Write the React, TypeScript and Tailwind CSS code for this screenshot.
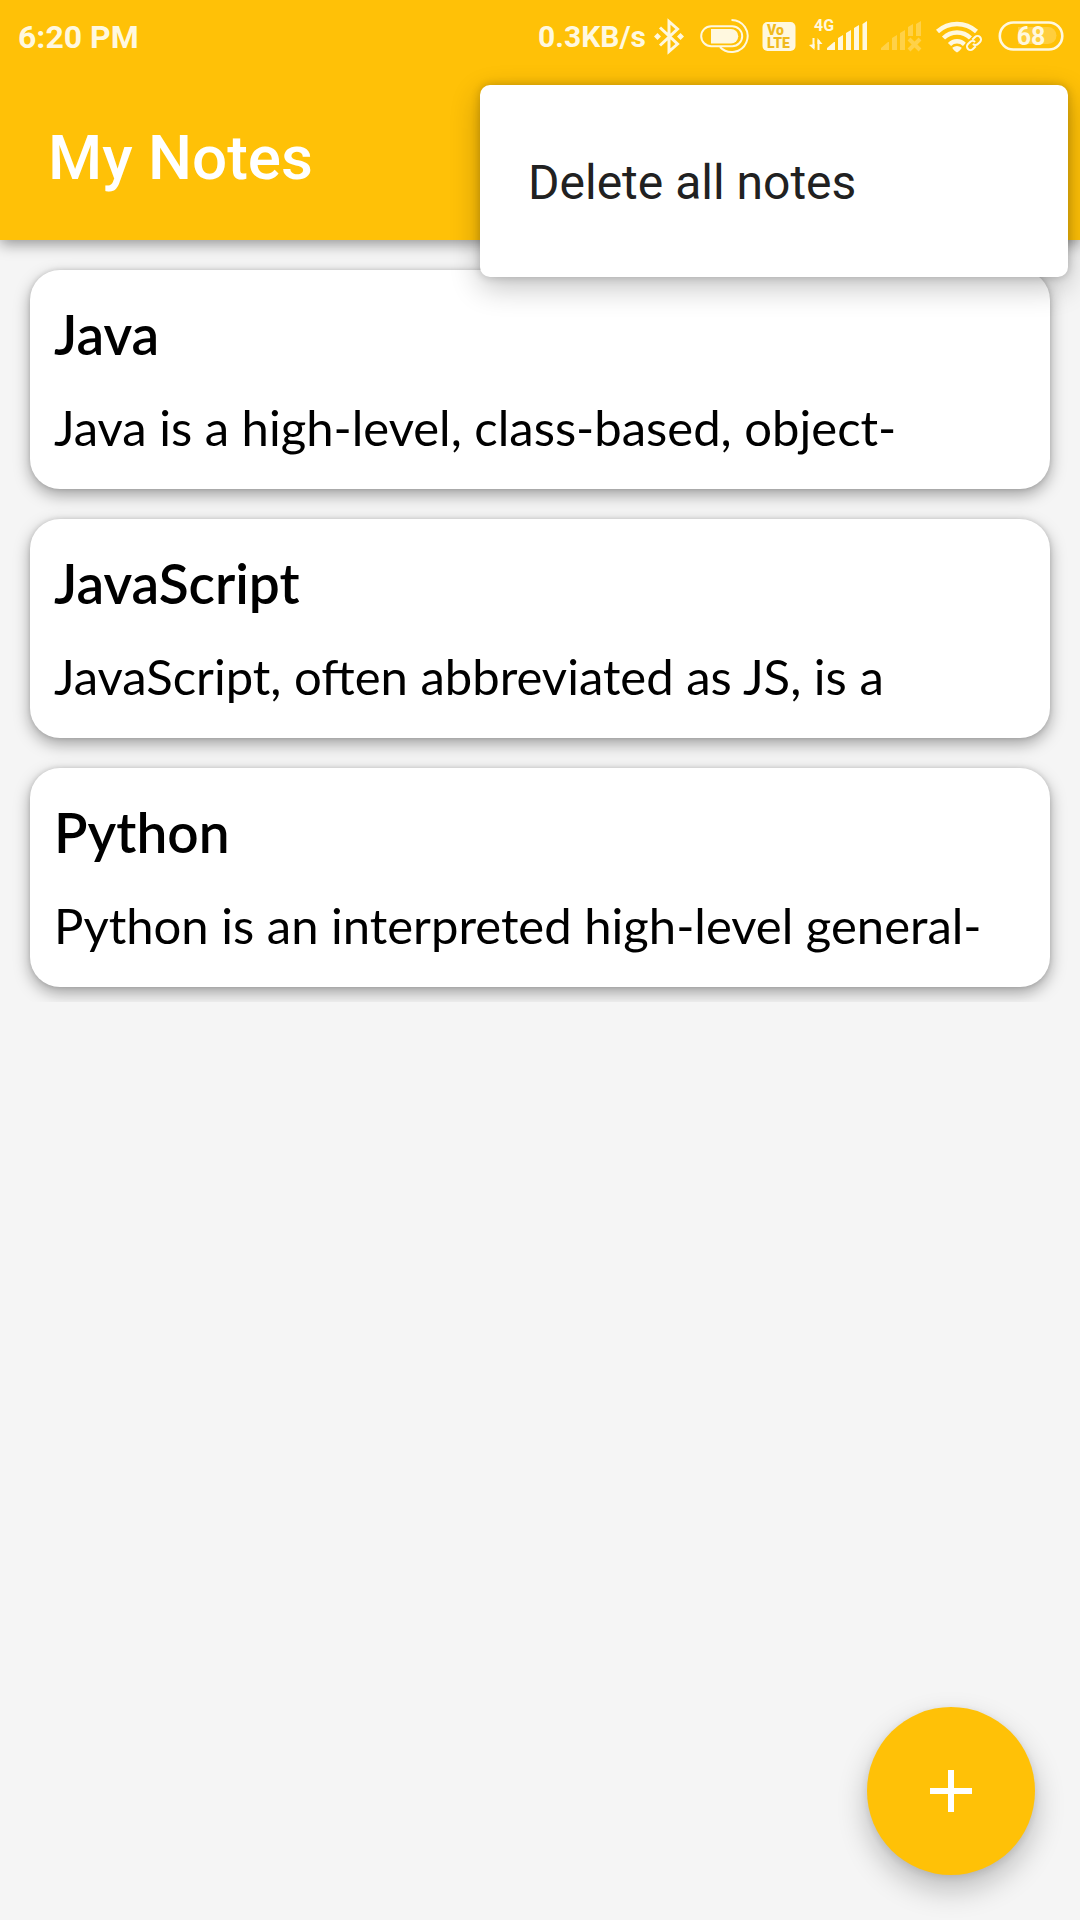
import React from "react";

const notes = [
  { title: "Java", body: "Java is a high-level, class-based, object-" },
  { title: "JavaScript", body: "JavaScript, often abbreviated as JS, is a" },
  { title: "Python", body: "Python is an interpreted high-level general-" },
];

function BluetoothIcon() {
  return (
    <svg className="h-10 w-8" viewBox="0 0 32 40" aria-label="Bluetooth" role="img">
      <path d="M6 11.500 23.500 28 15 35.500V5.500L23.500 13 6 29.500" fill="none" stroke="currentColor" strokeWidth="3" />
      <path d="m3.500 17 3.500 3.500L3.500 24 0 20.500zM26.500 17l3.500 3.500-3.500 3.500-3.500-3.500z" fill="currentColor" />
    </svg>
  );
}

function DeviceBatteryIcon() {
  return (
    <svg className="ml-3.5 h-10 w-[50px]" viewBox="0 0 50 40" aria-label="Bluetooth device battery" role="img">
      <rect x="1.200" y="10.200" width="41" height="20" rx="10" fill="none" stroke="currentColor" strokeWidth="2" />
      <path d="M11 13h20a7 7 0 0 1 0 14.500H11z" fill="currentColor" />
      <path d="M31.500 4A16 16 0 1 1 20 31" fill="none" stroke="currentColor" strokeWidth="2" />
    </svg>
  );
}

function VolteIcon() {
  return (
    <svg className="ml-3 h-10 w-[34px]" viewBox="0 0 34 40" aria-label="VoLTE" role="img">
      <rect x="0.500" y="6" width="33" height="29" rx="5" fill="currentColor" />
      <g fill="#f0b91c" fontFamily="Roboto, sans-serif" fontWeight="900">
        <text x="5" y="19" fontSize="14">Vo</text>
        <text x="5" y="32" fontSize="14">LTE</text>
      </g>
    </svg>
  );
}

function SignalIcon() {
  return (
    <svg className="ml-3 h-10 w-[60px]" viewBox="0 0 60 40" aria-label="4G signal" role="img">
      <text x="6" y="15" fontSize="16" fontFamily="Roboto, sans-serif" fontWeight="700" fill="currentColor">4G</text>
      <path d="M5.500 22v10M10.500 34V24" stroke="currentColor" strokeWidth="2" fill="none" />
      <path d="M6.500 34v-6L1 29zM9.500 22v6h5z" fill="currentColor" />
      <path d="M19 34v-2l7-6h1v8zM30 34V22l5-3v15zM38 34V17l5-3v20zM46 34V12l5-3v25zM54.500 34V8l4.500-3v29z" fill="currentColor" />
    </svg>
  );
}

function NoSignalIcon() {
  return (
    <svg className="ml-3 h-10 w-[42px] opacity-30" viewBox="0 0 42 40" aria-label="No signal" role="img">
      <path d="M1 34v-2l7-6h1v8zM12 34V22l5-3v15zM20 34V17l5-3v20zM28 20v-9l5-3v12zM36 20V8l5-3v15z" fill="currentColor" />
      <path d="m29 23 11 11M40 23 29 34" stroke="currentColor" strokeWidth="4" />
    </svg>
  );
}

function WifiIcon() {
  return (
    <svg className="ml-3.5 h-10 w-12" viewBox="0 0 48 40" aria-label="Wi-Fi" role="img">
      <g fill="none" stroke="currentColor" strokeWidth="4.500">
        <path d="M1.500 15.500a29 29 0 0 1 39 0" />
        <path d="M7.500 22a19.500 19.500 0 0 1 27 0" />
        <path d="M13.500 28.500a10.500 10.500 0 0 1 15 0" />
      </g>
      <path d="M16.500 31.500q4.500-3 9 0 .5 1.500-4.500 5-5-3.500-4.500-5z" fill="currentColor" />
      <g transform="translate(38 27) rotate(-45)" fill="none" stroke="#ffc107" strokeWidth="5">
        <rect x="-9" y="-3.500" width="10" height="7" rx="3.500" />
        <rect x="-1" y="-3.500" width="10" height="7" rx="3.500" />
      </g>
      <g transform="translate(38 27) rotate(-45)" fill="none" stroke="currentColor" strokeWidth="2">
        <path d="M-1 3.500h-4a3.500 3.500 0 0 1 0-7h3a3.500 3.500 0 0 1 3.500 3.500" />
        <path d="M1-3.500h4a3.500 3.500 0 0 1 0 7H2A3.500 3.500 0 0 1-1.500 0" />
      </g>
    </svg>
  );
}

function BatteryIcon() {
  return (
    <svg className="ml-3.5 h-10 w-[66px]" viewBox="0 0 66 40" aria-label="Battery 68 percent" role="img">
      <rect x="1.800" y="6.500" width="62.500" height="27" rx="13.500" fill="none" stroke="currentColor" strokeWidth="2.600" />
      <path d="M20 11h30a8.500 8.500 0 0 1 0 17H20z" fill="currentColor" opacity=".25" />
      <text x="33" y="29" textAnchor="middle" fontSize="25" fontFamily="Roboto, sans-serif" fontWeight="700" fill="currentColor">68</text>
    </svg>
  );
}

export default function App() {
  return (
    <div className="relative flex min-h-screen flex-col bg-[#f5f5f5] font-[Roboto,sans-serif] text-black">
      <header className="relative bg-[#ffc107] shadow-[0_4px_14px_rgba(0,0,0,0.4)]">
        <div className="flex h-[72px] items-center justify-between pr-4 pl-[18px] text-[#fff8df]">
          <time className="pt-0.5 text-[32px] leading-10 font-bold">6:20 PM</time>
          <div className="flex items-center">
            <span className="mr-2 pt-0.5 text-[30px] leading-10 font-bold">0.3KB/s</span>
            <BluetoothIcon />
            <DeviceBatteryIcon />
            <VolteIcon />
            <SignalIcon />
            <NoSignalIcon />
            <WifiIcon />
            <BatteryIcon />
          </div>
        </div>
        <div className="flex h-[168px] items-center px-12 pt-1">
          <h1 className="text-[62px] leading-[72px] font-medium text-white">My Notes</h1>
        </div>
        <div
          role="menu"
          className="absolute top-[85px] right-3 z-10 w-[588px] max-w-full rounded-[10px] bg-white py-6 shadow-[0_10px_30px_rgba(0,0,0,0.24),0_0_10px_rgba(0,0,0,0.2)]"
        >
          <button role="menuitem" type="button" className="flex h-36 w-full items-center px-12 pt-1 text-left text-[48px] leading-[56px] text-[#212121]">
            Delete all notes
          </button>
        </div>
      </header>

      <main className="flex flex-col gap-[30px] overflow-hidden px-[30px] pt-[30px] pb-[15px] font-[Lato,sans-serif]">
        {notes.map((note) => (
          <article key={note.title} className="rounded-[30px] bg-white px-6 pt-[30px] pb-7 shadow-[0_6px_16px_rgba(0,0,0,0.34),0_0_5px_rgba(0,0,0,0.14)]">
            <h2 className="text-[55px] leading-[68px] font-semibold">{note.title}</h2>
            <p className="mt-[26px] truncate text-[49px] leading-[67px]">{note.body}</p>
          </article>
        ))}
      </main>

      <button
        type="button"
        aria-label="Add note"
        className="fixed right-[45px] bottom-[45px] flex size-[168px] items-center justify-center rounded-full bg-[#ffc107] text-white shadow-[0_14px_30px_rgba(0,0,0,0.24),0_2px_8px_rgba(0,0,0,0.1)]"
      >
        <svg className="size-[42px]" viewBox="0 0 42 42" aria-hidden="true">
          <path d="M18 0h6v18h18v6H24v18h-6V24H0v-6h18z" fill="currentColor" />
        </svg>
      </button>
    </div>
  );
}
